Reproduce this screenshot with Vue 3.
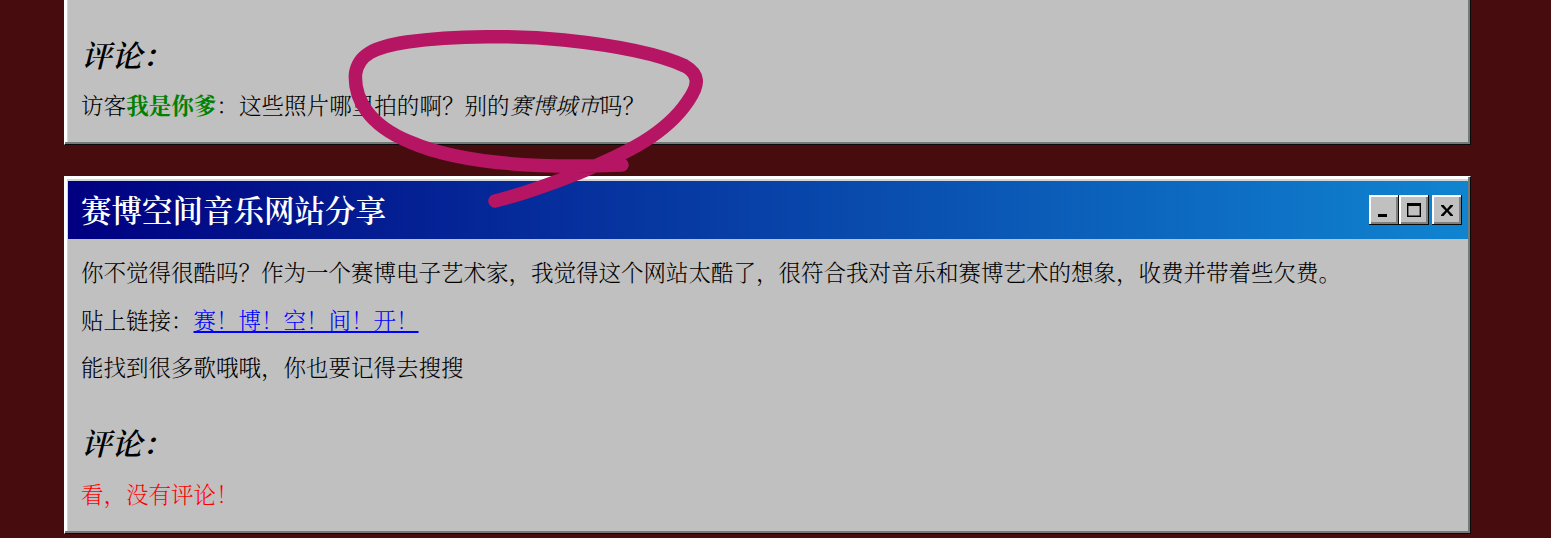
<script setup>
const paragraphs = {
  intro: '你不觉得很酷吗？作为一个赛博电子艺术家，我觉得这个网站太酷了，很符合我对音乐和赛博艺术的想象，收费并带着些欠费。',
  outro: '能找到很多歌哦哦，你也要记得去搜搜',
}
</script>

<template>
  <main class="page" lang="zh-CN">
    <section class="window first">
      <div class="content">
        <h3>评论：</h3>
        <p class="comment">访客<b class="visitor">我是你爹</b>：这些照片哪里拍的啊？别的<i>赛博城市</i>吗？</p>
      </div>
    </section>

    <section class="window second">
      <header class="titlebar">
        <h2>赛博空间音乐网站分享</h2>
        <div class="controls">
          <button aria-label="最小化">
            <svg viewBox="0 0 30 30"><path d="M9 19h9v3H9z" /></svg>
          </button>
          <button aria-label="最大化">
            <svg viewBox="0 0 30 30"><path fill-rule="evenodd" d="M8 8h14v14H8zM9.400 11v9.600h11.200V11z" /></svg>
          </button>
          <button class="close" aria-label="关闭">
            <svg viewBox="0 0 30 30"><path d="M9 10h2.600l3.400 3.900 3.400-3.900H21v1l-4.400 4.500L21 20v1h-2.600L15 17.100 11.600 21H9v-1l4.400-4.500L9 11z" /></svg>
          </button>
        </div>
      </header>
      <div class="content">
        <p>{{ paragraphs.intro }}</p>
        <p>贴上链接：<a href="#">赛！博！空！间！开！</a></p>
        <p>{{ paragraphs.outro }}</p>
        <h3>评论：</h3>
        <p class="comment empty">看，没有评论！</p>
      </div>
    </section>

    <svg class="marker" viewBox="0 0 380 200">
      <path d="M282 145C210 148 125 146 70 122C28 105 14 78 15.500 54C18 35 34 27 67 22C115 15 178 15.500 224 20C272 25 319 34 345 46C359 54 360 64 348 81C326 114 287 133 241 152C211 164 184 174 155 181" />
    </svg>
  </main>
</template>

<style>
body {
  background: #470c0d;
  overflow: hidden;
}
</style>

<style scoped>
.page {
  position: relative;
  box-sizing: border-box;
  width: 1551px;
  height: 538px;
  padding: 0 80px 0 64px;
  overflow: hidden;
  background: #470c0d;
  color: #000;
  font-family: "SimSun", "Noto Serif CJK SC", "Noto Sans CJK SC", serif;
  font-weight: 300;
}
.window {
  box-sizing: border-box;
  background: #c0c0c0;
  border: 1px solid;
  border-color: #fff #0a0a0a #0a0a0a #fff;
  box-shadow: inset -2px -2px #747a77, inset 2px 2px #fff, inset 3px 4px #d5d5d5;
}
.first {
  height: 145px;
  border-top: 0;
  padding: 33px 2px 2px 2px;
  box-shadow: inset -2px -2px #747a77, inset 2px 0 #fff, inset 3px 0 #d5d5d5;
}
.second {
  height: 358px;
  margin-top: 31px;
  padding: 4px 2px 2px 3px;
}
.titlebar {
  display: flex;
  align-items: center;
  justify-content: space-between;
  height: 58px;
  box-sizing: border-box;
  padding: 0 6px 0 13px;
  background: linear-gradient(90deg, #000080, #1084d0);
}
h2,
h3 {
  margin: 0;
  font-weight: 600;
}
h2 {
  color: #fff;
  font-size: 30.5px;
  line-height: 56px;
  height: 58px;
}
.controls {
  display: flex;
}
button {
  width: 30px;
  height: 30px;
  padding: 0;
  border: 0;
  background: #c0c0c0;
  box-shadow: inset -1px -1px #0a0a0a, inset 2px 2px #fff, inset -3px -3px #808080;
}
button svg {
  display: block;
  width: 30px;
  height: 30px;
}
.close {
  margin-left: 3px;
}
.content {
  padding-left: 13px;
}
.first .content {
  padding-left: 14px;
}
.second .content {
  padding-top: 16px;
}
p {
  margin: 0 0 15.5px;
  font-size: 22.5px;
  line-height: 32px;
  white-space: nowrap;
}
h3 {
  font-size: 30.5px;
  line-height: 44px;
  font-style: italic;
}
.first h3 {
  margin-top: -1px;
}
.second h3 {
  margin-top: 38px;
}
.comment {
  margin-top: 13px;
}
.first .comment {
  margin-top: 12px;
  letter-spacing: 0.06px;
}
.visitor {
  color: #008000;
  font-weight: 700;
}
i {
  font-style: italic;
}
a {
  color: #00f;
  text-decoration: underline;
  text-decoration-thickness: 2px;
  text-underline-offset: 2px;
}
.empty {
  color: #f00;
}
.marker {
  position: absolute;
  left: 340px;
  top: 20px;
  width: 380px;
  height: 200px;
  fill: none;
  stroke: #b51563;
  stroke-width: 13.5;
  stroke-linecap: round;
  stroke-linejoin: round;
  pointer-events: none;
}
</style>
